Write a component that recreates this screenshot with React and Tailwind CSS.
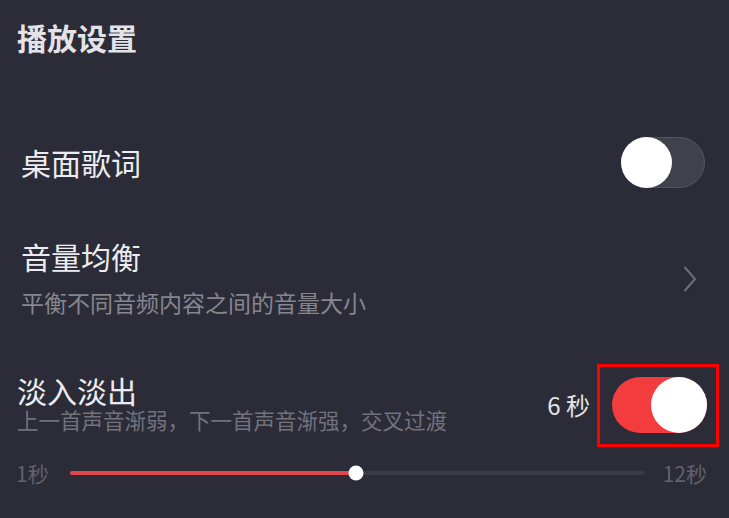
import { useState } from 'react';

const Toggle = ({ on, onChange, big }) => {
  if (on) {
    return (
      <button
        onClick={onChange}
        className={`flex items-center justify-end rounded-full bg-[#f33c3e] ${big ? 'h-[56px] w-[95px]' : 'h-[51px] w-[84px]'}`}
      >
        <span className={`rounded-full bg-white ${big ? 'h-[56px] w-[56px]' : 'h-[51px] w-[51px]'}`} />
      </button>
    );
  }
  return (
    <button
      onClick={onChange}
      className="flex h-[51px] w-[84px] items-center rounded-full border border-[#55555f] bg-[#41414b]"
    >
      <span className="-ml-px h-[51px] w-[51px] rounded-full bg-white" />
    </button>
  );
};

const App = () => {
  const [lyrics, setLyrics] = useState(false);
  const [fade, setFade] = useState(true);
  const value = 6;
  const pct = 49.8; // slider knob position as in the app

  return (
    <div
      className="flex h-[518px] w-full flex-col overflow-hidden bg-[#2c2c38] text-[#ececf0]"
      style={{ fontFamily: '"Noto Sans CJK SC", "Noto Sans", sans-serif' }}
    >
      <div className="flex h-[74px] items-center pl-[17px] text-[30px] font-semibold leading-[36px] text-[#e4e4e8]">
        播放设置
      </div>

      {/* 桌面歌词 */}
      <div className="mt-[38px] flex h-[100px] items-center justify-between pl-[21px] pr-[24px]">
        <span className="text-[30px] leading-[36px]">桌面歌词</span>
        <Toggle on={lyrics} onChange={() => setLyrics(!lyrics)} />
      </div>

      {/* 音量均衡 */}
      <div className="flex items-center justify-between pl-[21px] pr-[32px] pt-[26px]">
        <div className="flex flex-col">
          <span className="text-[30px] leading-[36px]">音量均衡</span>
          <span className="mt-[14px] text-[23px] leading-[28px] text-[#86868f]">平衡不同音频内容之间的音量大小</span>
        </div>
        <svg width="14" height="26" viewBox="0 0 14 26" fill="none" className="mt-[4px]">
          <path d="M2 1.5 L12 13 L2 24.5" stroke="#6e6e79" strokeWidth="2" strokeLinecap="round" strokeLinejoin="round" />
        </svg>
      </div>

      {/* 淡入淡出 */}
      <div className="mt-[48px] flex items-start justify-between pl-[17px] pr-[10px]">
        <div className="flex flex-col pt-[10px]">
          <span className="text-[30px] leading-[32px]">淡入淡出</span>
          <span className="text-[21.5px] leading-[28px] text-[#72727c]">上一首声音渐弱，下一首声音渐强，交叉过渡</span>
        </div>
        <div className="flex items-start gap-[7px]">
          <span className="mt-[26px] text-[24px] leading-[30px] text-[#e4e4e8]">{value} 秒</span>
          <div className="border-[3px] border-[#ff0000] pb-[11px] pl-[12px] pr-[9px] pt-[10px]">
            <Toggle on={fade} onChange={() => setFade(!fade)} big />
          </div>
        </div>
      </div>

      {/* slider */}
      <div className="mt-[14px] flex items-center pl-[16px] pr-[22px] text-[21px] leading-[24px] text-[#62626c]">
        <span className="w-[54px]">1秒</span>
        <div className="relative h-[4px] flex-1 rounded-full bg-[#3a3a45]">
          <div className="h-full rounded-full bg-[#e2474b]" style={{ width: `${pct}%` }} />
          <div
            className="absolute top-1/2 h-[15px] w-[15px] -translate-x-1/2 -translate-y-1/2 rounded-full bg-white"
            style={{ left: `${pct}%` }}
          />
        </div>
        <span className="ml-[18px]">12秒</span>
      </div>
    </div>
  );
};

export default App;
